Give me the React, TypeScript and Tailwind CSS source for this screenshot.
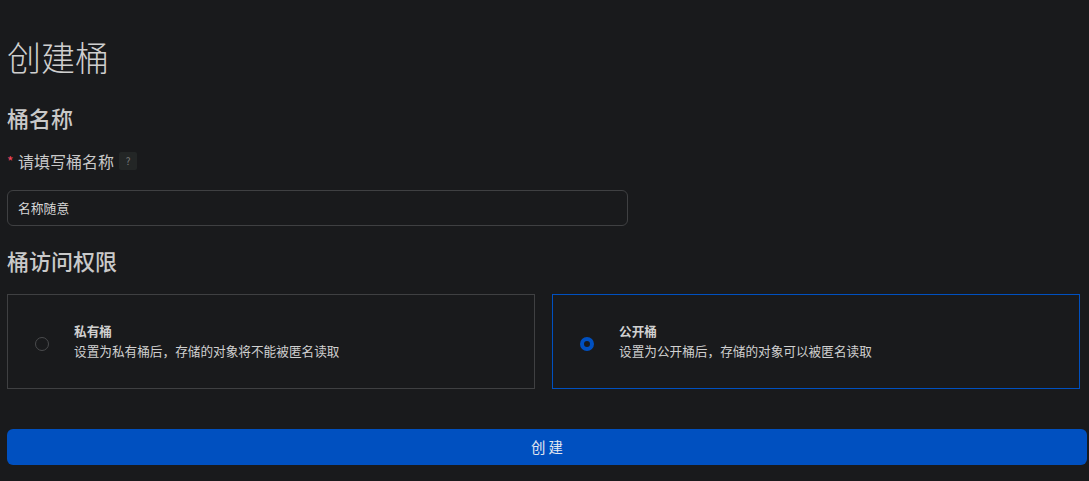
export default function App() {
  return (
    <div className="min-h-[481px] w-[1089px] overflow-hidden bg-[#191a1c] pl-[7px] pr-[2px] text-[#c9c9c9] font-['Noto_Sans_CJK_SC',sans-serif]">
      <h1 className="pt-[33px] text-[34px] leading-[48px] font-light text-[#cfcfcf]">创建桶</h1>
      <h2 className="mt-[20px] text-[22px] leading-[32px] font-medium">桶名称</h2>
      <div className="mt-[17px] flex h-[22px] items-center text-[16px] leading-[22px]">
        <span className="mr-[4px] w-[7px] text-[14px] text-[#f5455c]">*</span>
        <span>请填写桶名称</span>
        <span className="ml-[5px] flex h-[18px] w-[18px] items-center justify-center rounded-[2px] bg-[#232626] text-[10px] text-[#7a7a7a]">?</span>
      </div>
      <div className="mt-[18px] flex h-[36px] w-[621px] items-center rounded-[6px] border border-[#3f4042] px-[10px] text-[12.8px] text-[#d6d6d6]">名称随意</div>
      <h2 className="mt-[18px] text-[22px] leading-[32px] font-medium">桶访问权限</h2>
      <div className="mt-[18px] flex w-[1073px] gap-[17px]">
        <div className="flex h-[95px] w-[528px] items-center border border-[#3f4042] pl-[27px]">
          <span className="mt-[4px] h-[14px] w-[14px] rounded-full border border-[#4a4b4d]" />
          <div className="mb-[2px] ml-[25px] text-[12.65px] leading-[20px] text-[#d0d0d0]">
            <div className="font-bold">私有桶</div>
            <div>设置为私有桶后，存储的对象将不能被匿名读取</div>
          </div>
        </div>
        <div className="flex h-[95px] w-[528px] items-center border border-[#0050c0] pl-[27px]">
          <span className="mt-[4px] h-[14px] w-[14px] rounded-full border-[4px] border-[#0050c0]" />
          <div className="mb-[2px] ml-[25px] text-[12.65px] leading-[20px] text-[#d0d0d0]">
            <div className="font-bold">公开桶</div>
            <div>设置为公开桶后，存储的对象可以被匿名读取</div>
          </div>
        </div>
      </div>
      <button className="mt-[40px] flex h-[36px] w-[1080px] items-center justify-center rounded-[6px] bg-[#0050c0] text-[14.4px] text-[#e4e8f0]">创 建</button>
    </div>
  );
}
